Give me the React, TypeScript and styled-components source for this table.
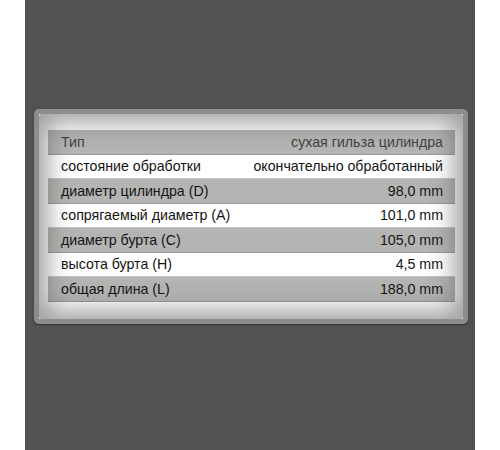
import * as React from 'react';
import styled, { createGlobalStyle } from 'styled-components';

const GlobalStyle = createGlobalStyle`
  html, body {
    margin: 0;
    padding: 0;
    background: #ffffff;
  }
`;

const Backdrop = styled.div`
  width: 450px;
  height: 450px;
  margin: 0 25px;
  background: #535250;
  padding-top: 109px;
  box-sizing: border-box;
`;

const Panel = styled.div`
  position: relative;
  width: 434px;
  margin-left: 9px;
  box-sizing: border-box;
  border-radius: 5px;
  border: 5px solid #8d8d8b;
  background: #ffffff;
  padding: 16px 8px 17px 9px;
  box-shadow: 0 1px 2px rgba(0, 0, 0, 0.4);

  &::after {
    content: '';
    position: absolute;
    inset: 0;
    border-radius: 2px;
    pointer-events: none;
    box-shadow: inset 0 0 24px 8px rgba(60, 60, 58, 0.5);
  }
`;

const Table = styled.div`
  display: flex;
  flex-direction: column;
  font-family: 'Liberation Sans', Arial, sans-serif;
  font-size: 14.2px;
`;

const Row = styled.div<{ $shaded: boolean; $head?: boolean }>`
  display: flex;
  justify-content: space-between;
  align-items: center;
  height: 23.5px;
  padding: 0 12px 0 13px;
  background: ${(p) => (p.$shaded ? '#b4b4b3' : '#ffffff')};
  border-bottom: 1px solid ${(p) => (p.$shaded ? '#9a9a99' : '#c4c4c4')};
  color: ${(p) => (p.$head ? '#424242' : '#141414')};
`;

const Label = styled.span``;

const Value = styled.span`
  text-align: right;
`;

const rows: [string, string][] = [
  ['состояние обработки', 'окончательно обработанный'],
  ['диаметр цилиндра (D)', '98,0 mm'],
  ['сопрягаемый диаметр (A)', '101,0 mm'],
  ['диаметр бурта (C)', '105,0 mm'],
  ['высота бурта (H)', '4,5 mm'],
  ['общая длина (L)', '188,0 mm'],
];

export default function App() {
  return (
    <>
      <GlobalStyle />
      <Backdrop>
        <Panel>
          <Table>
            <Row $shaded $head>
              <Label>Тип</Label>
              <Value>сухая гильза цилиндра</Value>
            </Row>
            {rows.map(([label, value], i) => (
              <Row key={label} $shaded={i % 2 === 1}>
                <Label>{label}</Label>
                <Value>{value}</Value>
              </Row>
            ))}
          </Table>
        </Panel>
      </Backdrop>
    </>
  );
}
